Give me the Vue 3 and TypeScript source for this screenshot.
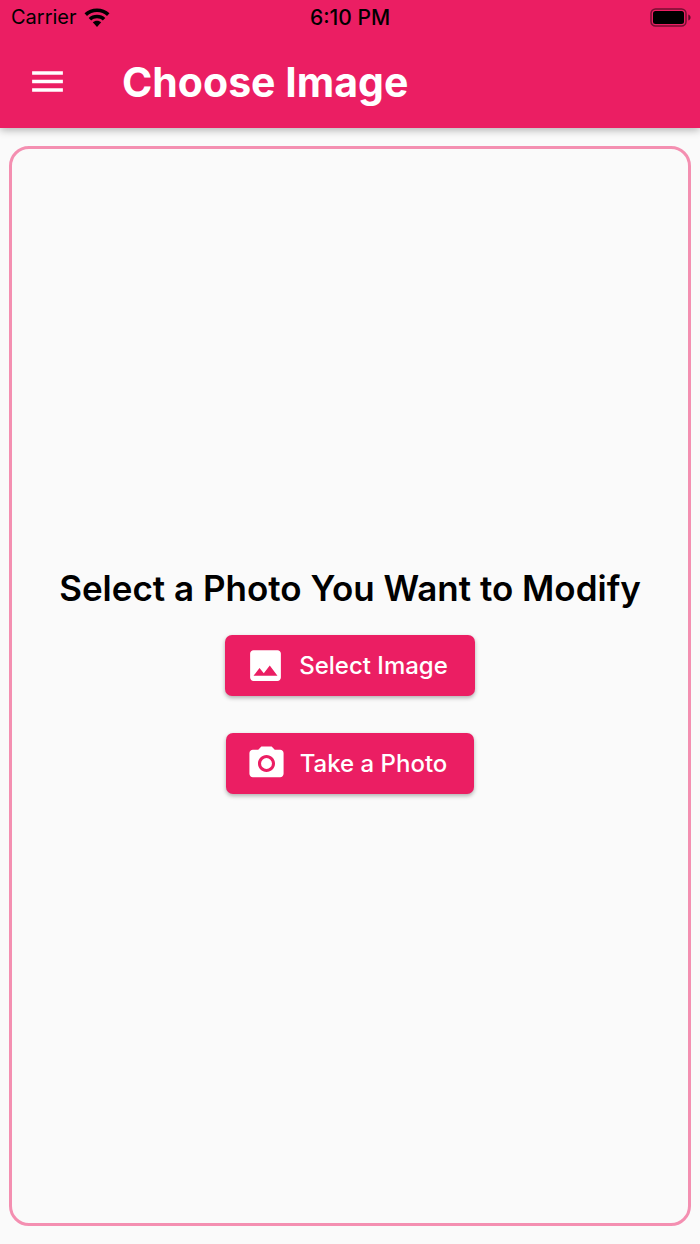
<script setup lang="ts">
interface Action {
  label: string
  viewBox: string
  path: string
}

const title = 'Choose Image'
const actions: Action[] = [
  {
    label: 'Select Image',
    viewBox: '0 0 24 24',
    path: 'M21 19V5c0-1.1-.9-2-2-2H5c-1.1 0-2 .9-2 2v14c0 1.1.9 2 2 2h14c1.1 0 2-.9 2-2zM8.5 13.5l2.5 3.01L14.5 12l4.500 6H5l3.500-4.500z',
  },
  {
    label: 'Take a Photo',
    viewBox: '0 0 24 24',
    path: 'M9 2 7.17 4H4c-1.1 0-2 .9-2 2v12c0 1.1.9 2 2 2h16c1.1 0 2-.9 2-2V6c0-1.1-.9-2-2-2h-3.17L15 2H9zm3 15c-2.76 0-5-2.24-5-5s2.24-5 5-5 5 2.24 5 5-2.24 5-5 5zm0-1.8a3.2 3.2 0 1 0 0-6.4 3.2 3.2 0 0 0 0 6.4z',
  },
]
</script>

<template>
  <div class="screen">
    <header class="top">
      <div class="status">
        <div class="carrier">
          <span>Carrier</span>
          <svg class="wifi" viewBox="0 0 26 20" aria-hidden="true">
            <path d="M13 .5C8.100.5 3.700 2.300.5 5.300L3 8C5.600 5.500 9.100 4.100 13 4.100S20.400 5.500 23 8L25.500 5.300C22.300 2.300 17.900.5 13 .5z" />
            <path d="M13 6.700C9.700 6.700 6.800 7.900 4.700 9.900L7.200 12.500C8.700 11.100 10.700 10.200 13 10.200S17.300 11.100 18.800 12.500L21.300 9.900C19.200 7.900 16.300 6.700 13 6.700z" />
            <path d="M13 12.700C11.300 12.700 9.900 13.300 8.800 14.300L13 19L17.200 14.300C16.100 13.300 14.700 12.700 13 12.700z" />
          </svg>
        </div>
        <time class="clock">6:10 PM</time>
        <div class="power">
          <svg class="battery" viewBox="0 0 42 20" aria-hidden="true">
            <rect x="1" y="1" width="35" height="17" rx="4.500" fill="none" stroke="#000" stroke-opacity=".5" stroke-width="1.500" />
            <rect x="3" y="3" width="31" height="13" rx="2.500" />
            <path d="M38.300 6.500c3 .8 3 5.200 0 6z" fill-opacity=".6" />
          </svg>
        </div>
      </div>
      <div class="bar">
        <button class="menu" type="button" aria-label="Open menu">
          <svg class="icon" viewBox="0 0 24 24" aria-hidden="true">
            <path d="M3 18h18v-2H3v2zm0-5h18v-2H3v2zm0-7v2h18V6H3z" />
          </svg>
        </button>
        <h1>{{ title }}</h1>
      </div>
    </header>
    <main>
      <section class="frame">
        <h2>Select a Photo You Want to Modify</h2>
        <button v-for="action in actions" :key="action.label" class="action" type="button">
          <svg class="icon" :viewBox="action.viewBox" aria-hidden="true">
            <path fill-rule="evenodd" :d="action.path" />
          </svg>
          <span>{{ action.label }}</span>
        </button>
      </section>
    </main>
  </div>
</template>

<style>
body {
  margin: 0;
  background: #fafafa;
}
</style>

<style scoped>
.screen {
  min-height: 100vh;
  display: flex;
  flex-direction: column;
  background: #fafafa;
  color: #000;
  font-family: Inter, "Liberation Sans", sans-serif;
}

.top {
  background: #eb1e63;
  box-shadow: 0 2px 8px rgba(0, 0, 0, 0.3);
}

.status {
  display: grid;
  grid-template-columns: 1fr auto 1fr;
  align-items: center;
  height: 35px;
  padding: 0 8px;
  font-size: 20px;
  line-height: 35px;
}

.carrier {
  display: flex;
  align-items: center;
  gap: 7px;
  padding-left: 3px;
}

.wifi {
  width: 26px;
  height: 20px;
}

.clock {
  font-size: 21px;
  font-weight: 500;
}

.power {
  display: flex;
  justify-content: flex-end;
}

.battery {
  width: 42px;
  height: 20px;
}

.bar {
  display: flex;
  align-items: center;
  gap: 54px;
  height: 93px;
  padding: 0 27px;
  color: #fff;
}

.icon {
  display: block;
  flex: none;
  width: 41px;
  height: 41px;
  fill: currentColor;
}

.menu {
  border: 0;
  padding: 0;
  background: none;
  color: inherit;
}

h1,
h2 {
  margin: 0;
}

h1 {
  font-size: 41px;
  line-height: 48px;
  font-weight: 700;
}

main {
  flex: 1;
  display: flex;
  padding: 18px 9px;
}

.frame {
  flex: 1;
  display: flex;
  flex-direction: column;
  align-items: center;
  justify-content: center;
  border: 3px solid #f48fb1;
  border-radius: 20px;
}

h2 {
  font-size: 35px;
  line-height: 40px;
  font-weight: 600;
  margin-bottom: 17px;
}

.action {
  display: flex;
  align-items: center;
  gap: 13px;
  height: 61px;
  margin: 10px 0;
  padding: 0 27px 0 20px;
  border: 0;
  border-radius: 7px;
  background: #eb1e63;
  box-shadow: 0 2px 4px rgba(0, 0, 0, 0.3);
  color: #fff;
  font: 500 24px/32px Inter, "Liberation Sans", sans-serif;
}

.action + .action {
  margin-top: 27px;
}
</style>
